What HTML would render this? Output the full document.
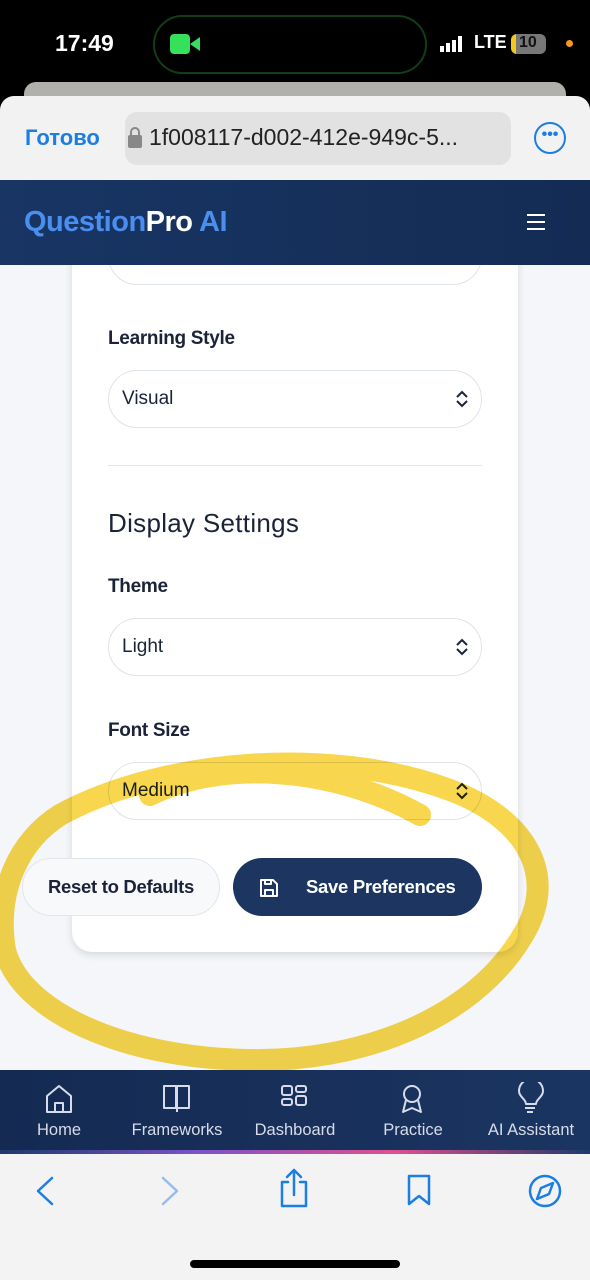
<!DOCTYPE html>
<html><head><meta charset="utf-8"><style>
*{margin:0;padding:0;box-sizing:border-box}
body{width:590px;height:1280px;overflow:hidden;background:#000;font-family:"Liberation Sans",sans-serif;position:relative}
.abs{position:absolute}
.sel{position:absolute;left:108px;width:374px;height:58px;border:1px solid #dfe3ea;border-radius:29px;background:#fff;font-size:19px;color:#1b2338;padding-left:13px;line-height:56px}
.sel svg{position:absolute;right:12px;top:19px}
.lbl{position:absolute;left:108px;font-size:19px;font-weight:bold;color:#1b2338;letter-spacing:-0.3px}
.nav{position:absolute;top:1070px;height:84px;width:590px;background:linear-gradient(90deg,#142a52,#1b3562)}
.ni{position:absolute;top:1121px;font-size:16.5px;color:#d6dcea;text-align:center;width:110px}
</style></head><body>
<div class="abs" style="left:55px;top:30px;color:#fff;font-size:23px;font-weight:bold">17:49</div>
<div class="abs" style="left:153px;top:15px;width:274px;height:59px;border-radius:30px;border:2px solid #123d17;background:#000"></div>
<div class="abs" style="left:170px;top:34px;width:20px;height:20px;background:#35e05a;border-radius:4px"></div>
<div class="abs" style="left:190px;top:37px;border-right:10px solid #35e05a;border-top:7px solid transparent;border-bottom:7px solid transparent;width:0;height:14px"></div>
<div class="abs" style="left:440px;top:36px;display:flex;align-items:flex-end;gap:2px;height:16px">
<div style="width:4px;height:6px;background:#fff"></div><div style="width:4px;height:9px;background:#fff"></div><div style="width:4px;height:12px;background:#fff"></div><div style="width:4px;height:16px;background:#fff"></div></div>
<div class="abs" style="left:474px;top:32px;color:#fff;font-size:18px;font-weight:bold">LTE</div>
<div class="abs" style="left:511px;top:34px;width:35px;height:20px;border-radius:6px;background:#777;overflow:hidden"><div style="width:5px;height:20px;background:#f2c91c"></div></div>
<div class="abs" style="left:519px;top:34px;font-size:16px;font-weight:bold;color:#111">10</div>
<div class="abs" style="left:566px;top:40px;width:7px;height:7px;border-radius:50%;background:#f59a1f"></div>
<div class="abs" style="left:24px;top:82px;width:542px;height:30px;border-radius:12px;background:#b0b0ad"></div>
<div class="abs" style="left:0;top:96px;width:590px;height:90px;background:#f2f2f2;border-radius:14px 14px 0 0"></div>
<div class="abs" style="left:25px;top:125px;color:#1b7ee3;font-size:22px;font-weight:bold">Готово</div>
<div class="abs" style="left:125px;top:112px;width:386px;height:53px;border-radius:12px;background:#e2e2e2"></div>
<div class="abs" style="left:128px;top:135px;width:14px;height:13px;background:#888;border-radius:2px"></div>
<div class="abs" style="left:130px;top:127px;width:10px;height:12px;border:2px solid #888;border-radius:5px 5px 0 0"></div>
<div class="abs" style="left:149px;top:124px;font-size:23px;color:#222">1f008117-d002-412e-949c-5...</div>
<div class="abs" style="left:534px;top:122px;width:32px;height:32px;border:2px solid #1b7ee3;border-radius:50%;color:#1b7ee3;font-size:16px;text-align:center;line-height:22px;font-weight:bold">•••</div>
<div class="abs" style="left:0;top:180px;width:590px;height:85px;background:linear-gradient(90deg,#183564,#142c54)"></div>
<div class="abs" style="left:24px;top:206px;font-size:29px;font-weight:bold;color:#4a8ef0;letter-spacing:-0.5px">Question<span style="color:#fff">Pro</span> AI</div>
<div class="abs" style="left:527px;top:214px;width:18px;height:2px;background:#fff;box-shadow:0 7px 0 #fff,0 14px 0 #fff"></div>
<div class="abs" style="left:0;top:265px;width:590px;height:805px;background:#f4f6f9;overflow:hidden">
 <div class="abs" style="left:72px;top:-30px;width:446px;height:717px;background:#fff;border-radius:20px;box-shadow:0 3px 8px rgba(0,0,0,0.12)"></div>
 <div class="sel" style="top:-38px"></div>
</div>
<div class="lbl" style="top:328px">Learning Style</div>
<div class="sel" style="top:370px">Visual<svg width="14" height="18" viewBox="0 0 14 18"><path d="M2 7l5-5 5 5M2 11l5 5 5-5" stroke="#1b2338" stroke-width="2" fill="none"/></svg></div>
<div class="abs" style="left:108px;top:465px;width:374px;height:1px;background:#e3e6ec"></div>
<div class="abs" style="left:108px;top:508px;font-size:26px;color:#1b2338;letter-spacing:0.3px">Display Settings</div>
<div class="lbl" style="top:576px">Theme</div>
<div class="sel" style="top:618px">Light<svg width="14" height="18" viewBox="0 0 14 18"><path d="M2 7l5-5 5 5M2 11l5 5 5-5" stroke="#1b2338" stroke-width="2" fill="none"/></svg></div>
<div class="lbl" style="top:720px">Font Size</div>
<div class="sel" style="top:762px">Medium<svg width="14" height="18" viewBox="0 0 14 18"><path d="M2 7l5-5 5 5M2 11l5 5 5-5" stroke="#1b2338" stroke-width="2" fill="none"/></svg></div>
<div class="abs" style="left:22px;top:858px;width:198px;height:58px;border-radius:29px;border:1px solid #e2e5ea;background:#f8f9fb;text-align:center;line-height:56px;font-size:18.5px;font-weight:bold;color:#1b2338;letter-spacing:-0.3px">Reset to Defaults</div>
<div class="abs" style="left:233px;top:858px;width:249px;height:58px;border-radius:29px;background:#1c3561;color:#fff;font-size:18.5px;font-weight:bold;line-height:58px;padding-left:73px;letter-spacing:-0.3px">Save Preferences
<svg class="abs" style="left:26px;top:20px" width="20" height="20" viewBox="0 0 20 20"><path d="M2 2h12l4 4v12H2z M6 18v-6h8v6 M6 2v4h6V2" stroke="#fff" stroke-width="2" fill="none" stroke-linejoin="round"/></svg></div>
<svg class="abs" style="left:0;top:0;mix-blend-mode:multiply" width="590" height="1280"><path d="M150 795 C220 760 330 765 420 815 M60 815 C160 760 330 745 450 790 C530 820 560 880 520 940 C470 1020 360 1062 250 1060 C120 1058 20 1010 5 950 C-5 890 20 840 60 815" stroke="#f7cf2e" stroke-opacity="0.85" stroke-width="22" fill="none" stroke-linecap="round"/></svg>
<div class="nav"></div>
<div class="abs" style="left:0;top:1150px;width:590px;height:4px;background:linear-gradient(90deg,#1d3a6a,#7b53c9,#e0508f,#1d3a6a)"></div>
<svg class="abs" style="left:0;top:1082px" width="590" height="34" fill="none" stroke="#d6dcea" stroke-width="2" stroke-linejoin="round">
<path d="M47 30V14l12-10 12 10v16z M55 30v-9h8v9"/>
<path d="M164 4h12v22h-12z M177 26V4h12v22h-12 M177 26v4"/>
<rect x="282" y="4" width="10" height="9" rx="2"/><rect x="296" y="4" width="10" height="6" rx="2"/><rect x="282" y="17" width="10" height="6" rx="2"/><rect x="296" y="14" width="10" height="9" rx="2"/>
<circle cx="412" cy="12" r="8"/><path d="M406 18l-3 12 9-4 9 4-3-12"/>
<path d="M526 22c0-5-7-7-7-13a12 12 0 0 1 24 0c0 6-7 8-7 13z M525 26h10 M527 30h6"/>
</svg>
<div class="ni" style="left:4px">Home</div>
<div class="ni" style="left:122px">Frameworks</div>
<div class="ni" style="left:240px">Dashboard</div>
<div class="ni" style="left:358px">Practice</div>
<div class="ni" style="left:476px">AI Assistant</div>
<div class="abs" style="left:0;top:1154px;width:590px;height:126px;background:#f3f3f3"></div>
<svg class="abs" style="left:0;top:1168px" width="590" height="50" fill="none" stroke="#1b7ee3" stroke-width="2.5" stroke-linecap="round" stroke-linejoin="round">
<path d="M52 10L38 23l14 13"/>
<path d="M163 10l14 13-14 13" stroke="#93bdf0"/>
<path d="M288 14h-6v24h24V14h-6 M294 27V2 M287 9l7-7 7 7"/>
<path d="M409 8h20v28l-10-8-10 8z"/>
<circle cx="545" cy="23" r="15"/><path d="M553 15l-12 5-4 11 12-5z"/>
</svg>
<div class="abs" style="left:190px;top:1260px;width:210px;height:8px;border-radius:4px;background:#000"></div>
</body></html>
